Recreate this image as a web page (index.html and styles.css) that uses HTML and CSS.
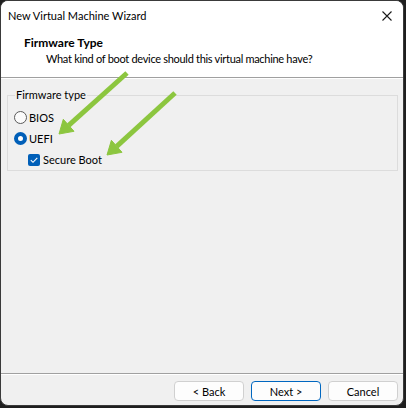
FILE: index.html
```html
<!DOCTYPE html>
<html lang="en">
<head>
    <meta charset="UTF-8">
    <title>New Virtual Machine Wizard</title>
    <link rel="stylesheet" href="styles.css">
</head>
<body>
    <div class="window">
        <div class="titlebar">
            <span class="title">New Virtual Machine Wizard</span>
            <svg class="close" width="10" height="10" viewBox="0 0 10 10">
                <path d="M0.5 0.5 L9.5 9.5 M9.5 0.5 L0.5 9.5" stroke="#1a1a1a" stroke-width="1.1" fill="none"/>
            </svg>
        </div>
        <div class="header">
            <div class="header-title">Firmware Type</div>
            <div class="header-sub">What kind of boot device should this virtual machine have?</div>
        </div>
        <div class="content">
            <fieldset class="group">
                <legend>Firmware type</legend>
                <div class="option">
                    <span class="radio"></span>
                    <span>BIOS</span>
                </div>
                <div class="option">
                    <span class="radio checked"></span>
                    <span>UEFI</span>
                </div>
                <div class="option sub">
                    <span class="checkbox">
                        <svg width="12" height="12" viewBox="0 0 12 12">
                            <path d="M2.8 6.2 L5 8.3 L9.3 3.8" stroke="#fff" stroke-width="1.1" fill="none"/>
                        </svg>
                    </span>
                    <span>Secure Boot</span>
                </div>
            </fieldset>
        </div>
        <div class="footer">
            <button class="button">&lt; Back</button>
            <button class="button default">Next &gt;</button>
            <button class="button">Cancel</button>
        </div>

        <!-- annotation arrows drawn over the dialog -->
        <svg class="arrows" width="404" height="406" viewBox="0 0 404 406">
            <g fill="#8cc63f" stroke="#8cc63f">
                <line x1="127" y1="73" x2="68.7" y2="125.3" stroke-width="5"/>
                <polygon points="59,134 74,131.3 63.3,119.3" stroke-width="1" stroke-linejoin="round"/>
                <line x1="175" y1="93" x2="116.7" y2="146.3" stroke-width="5"/>
                <polygon points="107,155 122,152.3 111.4,140.3" stroke-width="1" stroke-linejoin="round"/>
            </g>
        </svg>
    </div>
</body>
</html>
```

FILE: styles.css
```css
body {
    margin: 0;
    background-color: #1f1f1f;
    font-family: Lato, sans-serif;
    font-size: 11px;
    color: #000;
}

.window {
    position: relative;
    box-sizing: border-box;
    width: 404px;
    height: 406px;
    border: 1px solid #3a3a3a;
    border-radius: 8px;
    overflow: hidden;
    background-color: #f0f0f0;
    display: flex;
    flex-direction: column;
}

.titlebar {
    height: 29px;
    background-color: #fff;
    display: flex;
    align-items: center;
    justify-content: space-between;
    padding: 0 11px 0 7px;
}

.close {
    display: block;
}

.header {
    background-color: #fff;
    height: 48px;
    box-sizing: border-box;
    padding: 5px 0 0 23px;
    border-bottom: 1px solid #a0a0a0;
    box-shadow: 0 1px 0 #fff;
    line-height: 16px;
}

.header-title {
    font-weight: bold;
    font-size: 12px;
}

.header-sub {
    padding-left: 22px;
    letter-spacing: -0.3px;
}

.content {
    flex: 1;
    padding-top: 9px;
}

.group {
    margin: 0 5px 0 6px;
    padding: 4px 6px 0 6px;
    border: 1px solid #dcdcdc;
    line-height: 16px;
}

.group legend {
    padding: 0 1px;
    margin-left: 1px;
}

.option {
    height: 21px;
    display: flex;
    align-items: center;
    gap: 2px;
}

.option.sub {
    padding-left: 14px;
    gap: 3px;
}

.radio {
    box-sizing: border-box;
    width: 13px;
    height: 13px;
    border: 1px solid #5a5a5a;
    border-radius: 50%;
    background-color: #fbfbfb;
}

.radio.checked {
    border: 4px solid #005fb8;
    background-color: #fff;
}

.checkbox {
    width: 12px;
    height: 12px;
    border-radius: 2px;
    background-color: #005fb8;
    display: flex;
}

.footer {
    border-top: 1px solid #a0a0a0;
    box-shadow: inset 0 1px 0 #fff;
    padding: 7px 5px 4px 0;
    display: flex;
    justify-content: flex-end;
    gap: 7px;
}

.button {
    width: 70px;
    height: 20px;
    padding: 0;
    background-color: #fdfdfd;
    border: 1px solid #d0d0d0;
    border-radius: 4px;
    font-family: Lato, sans-serif;
    font-size: 11px;
    color: #000;
}

.button.default {
    border-color: #0067c0;
}

.arrows {
    position: absolute;
    left: -1px;
    top: -1px;
    pointer-events: none;
}
```
